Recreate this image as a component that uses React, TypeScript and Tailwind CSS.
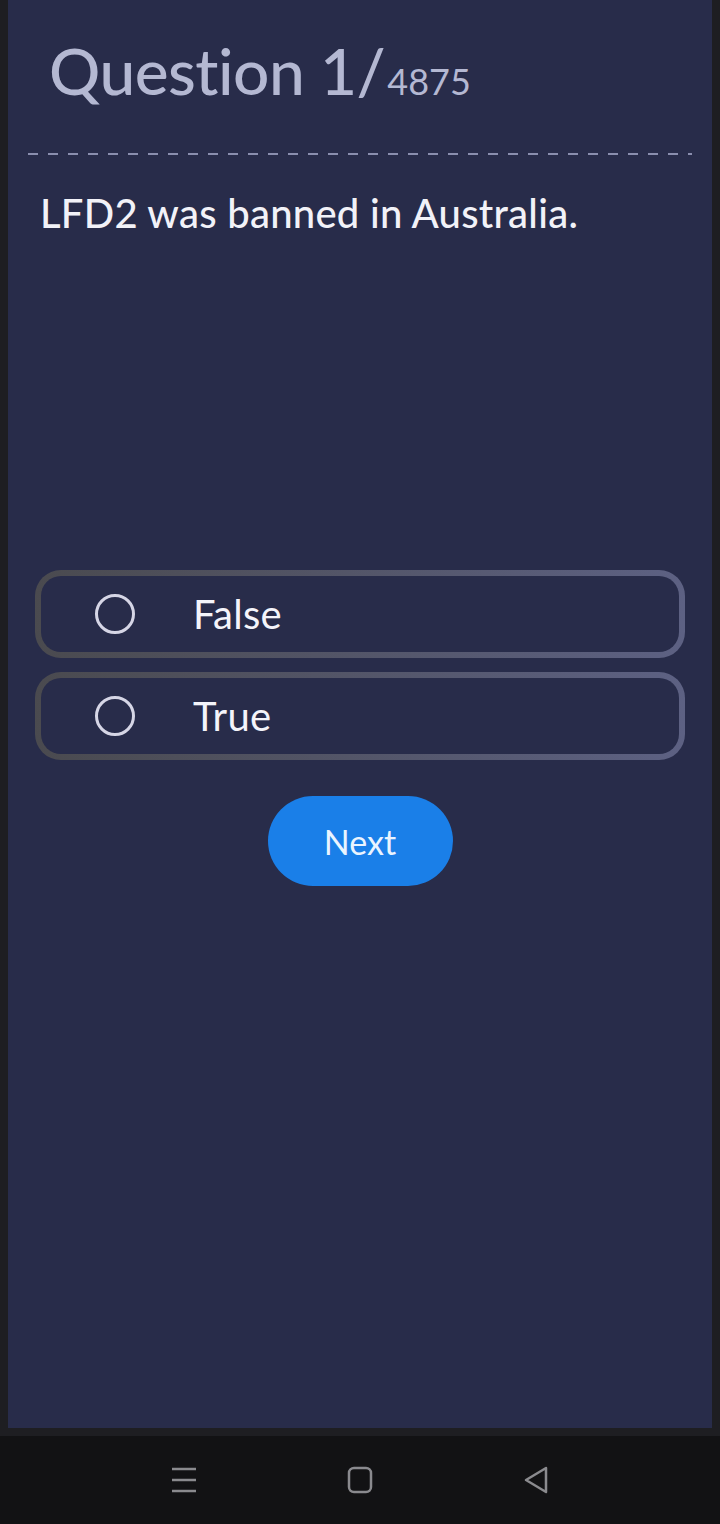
import React from "react";

function Option({ label }: { label: string }) {
  return (
    <div className="rounded-[26px] bg-gradient-to-r from-[#4a4a4f] to-[#5d6183] p-[6px]">
      <div className="flex h-[76px] items-center rounded-[20px] bg-[#282c4a] pl-[54px]">
        <div className="h-[40px] w-[40px] rounded-full border-[3px] border-[#d6d6e6]" />
        <span className="ml-[58px] text-[40px] leading-none tracking-[0.3px] text-[#f4f4fa]">{label}</span>
      </div>
    </div>
  );
}

export default function App() {
  return (
    <div
      className="flex h-[1524px] w-[720px] flex-col bg-[#1e1e22]"
      style={{ fontFamily: "Lato, 'Noto Sans', sans-serif" }}
    >
      <div className="mx-2 flex h-[1428px] flex-col bg-[#282c4a]">
        <div className="flex items-baseline pl-[41px] pt-[39px]">
          <span className="text-[64px] font-medium leading-none tracking-[-0.5px] text-[#b4b8d2]">Question 1/</span>
          <span className="ml-[2px] text-[36px] leading-none text-[#b4b8d2]">4875</span>
        </div>
        <div className="mx-[20px] mt-[50px] h-[2px] bg-[repeating-linear-gradient(90deg,#8a8eae_0px,#8a8eae_10px,transparent_10px,transparent_20px)]" />
        <div className="pl-[32px] pt-[38px] text-[40px] font-medium leading-none tracking-[0.25px] text-[#f2f2f8]">
          LFD2 was banned in Australia.
        </div>
        <div className="mt-[337px] flex flex-col gap-[14px] px-[27px]">
          <Option label="False" />
          <Option label="True" />
        </div>
        <div className="mt-[36px] flex justify-center">
          <button className="flex h-[90px] w-[185px] items-center justify-center rounded-full bg-[#1a7fe8] text-[34px] text-[#eaf4ff]">
            Next
          </button>
        </div>
      </div>
      <div className="mt-[8px] flex h-[88px] items-center justify-center bg-[#121214]">
        <div className="flex w-[380px] items-center justify-between">
          <svg width="28" height="28" viewBox="0 0 28 28">
            <g stroke="#8a8a8e" strokeWidth="2.5">
              <line x1="2" y1="3" x2="26" y2="3" />
              <line x1="2" y1="14" x2="26" y2="14" />
              <line x1="2" y1="25" x2="26" y2="25" />
            </g>
          </svg>
          <svg width="26" height="28" viewBox="0 0 26 28">
            <rect x="2" y="2" width="22" height="24" rx="5" fill="none" stroke="#8a8a8e" strokeWidth="2.5" />
          </svg>
          <svg width="28" height="30" viewBox="0 0 28 30">
            <path d="M24 3 L4 15 L24 27 Z" fill="none" stroke="#8a8a8e" strokeWidth="2.5" strokeLinejoin="round" />
          </svg>
        </div>
      </div>
    </div>
  );
}
